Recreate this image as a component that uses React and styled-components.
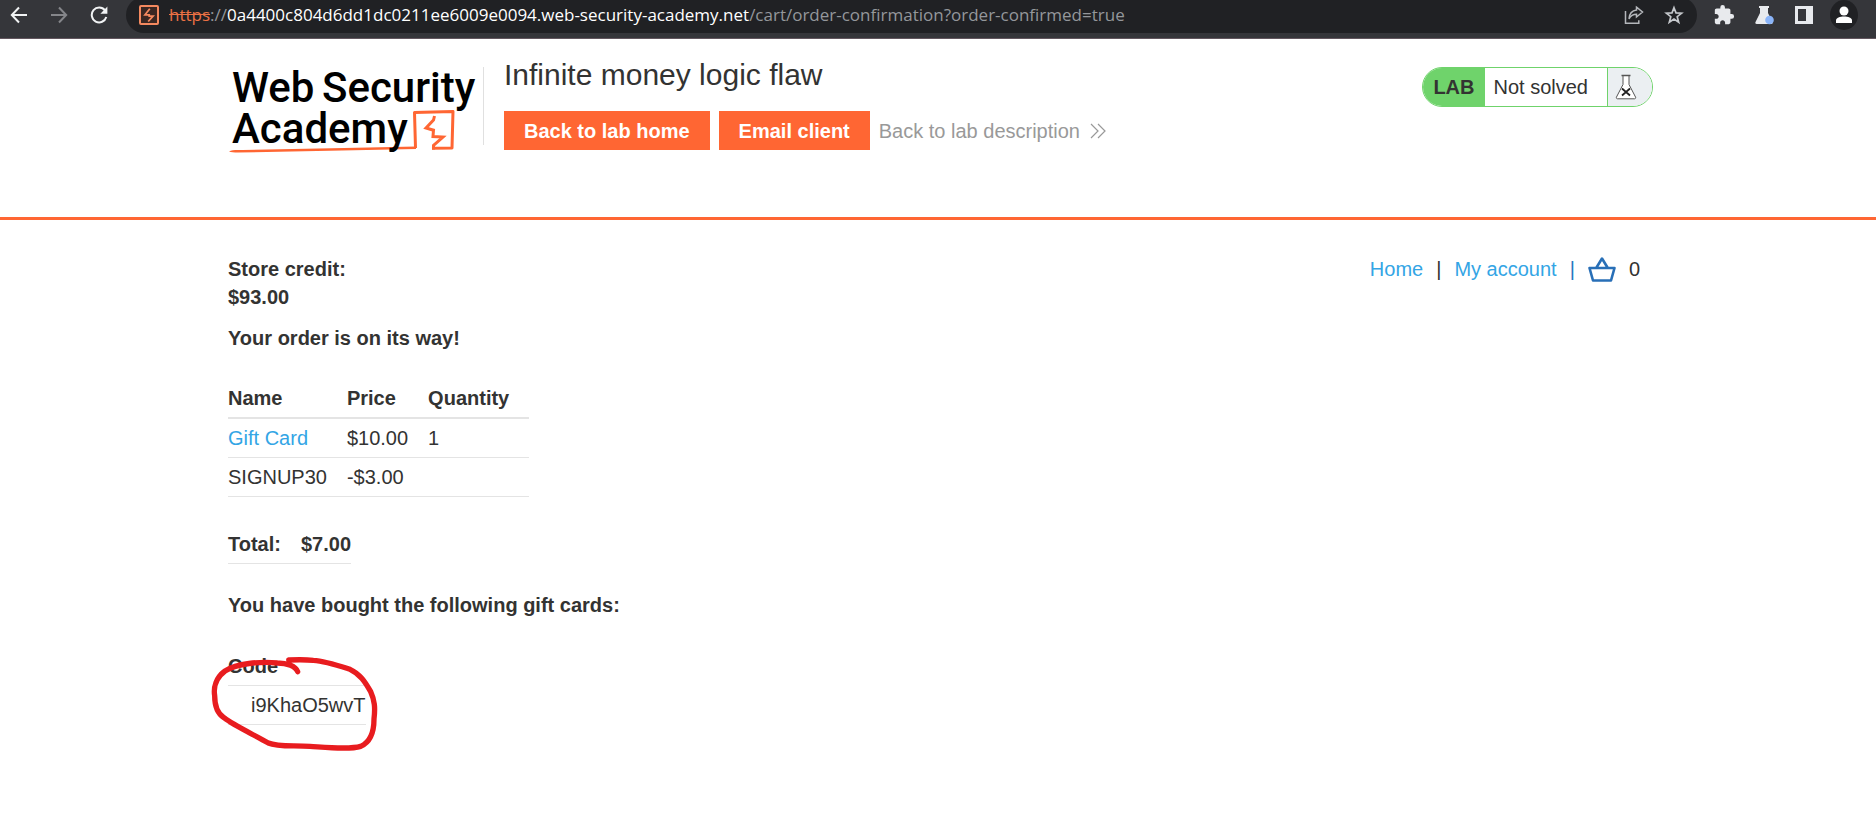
import React from "react";
import styled, { createGlobalStyle } from "styled-components";

const Global = createGlobalStyle`
  *, *::before, *::after { box-sizing: border-box; }
  body {
    margin: 0;
    background: #fff;
    color: #333332;
    font: 20px/28px Arial, "Liberation Sans", sans-serif;
  }
  a { text-decoration: none; }
`;

/* Browser toolbar */
const Toolbar = styled.div`
  display: flex;
  align-items: flex-start;
  height: 39px;
  padding-right: 18px;
  overflow: hidden;
  background: #35363a;
  border-bottom: 1px solid #63575f;
`;

const IconButton = styled.button`
  display: flex;
  align-items: center;
  justify-content: center;
  flex: none;
  width: 28px;
  height: 30px;
  margin: 0;
  padding: 0;
  border: 0;
  border-radius: ${(p) => (p.$round ? "50%" : "0")};
  background: ${(p) => (p.$round ? "#202124" : "transparent")};
  color: ${(p) => p.$color || "#e8eaed"};
  svg { display: block; flex: none; }
`;

const NavButtons = styled.div`
  display: flex;
  gap: 12px;
  padding: 0 13px 0 5px;
`;

const AddressBar = styled.div`
  display: flex;
  align-items: center;
  flex: 1;
  min-width: 0;
  height: 36px;
  margin-top: -3px;
  padding: 0 9px 0 13px;
  border-radius: 18px;
  background: #202124;
`;

const Address = styled.div`
  flex: 1;
  min-width: 0;
  margin-left: 10px;
  overflow: hidden;
  white-space: nowrap;
  color: #94979b;
  font: 17px/28px "Open Sans", "Noto Sans", sans-serif;
`;

const Unsafe = styled.span`
  color: #ec7144;
  text-decoration: line-through;
`;

const Domain = styled.span`
  color: #fff;
`;

const AddressActions = styled.div`
  display: flex;
  gap: 12px;
`;

const Extensions = styled.div`
  display: flex;
  gap: 12px;
  padding-left: 13px;
`;

/* Lab header */
const Header = styled.header`
  display: flex;
  align-items: flex-start;
  min-height: 181px;
  padding: 28px 223px 28px 228px;
  border-bottom: 3px solid #ff6633;
`;

const LogoLink = styled.a`
  display: block;
  flex: none;
  padding-right: 6px;
  border-right: 1px solid #e0e0e0;
  height: 78px;
  svg { display: block; overflow: visible; }
`;

const LogoText = styled.text`
  font: 500 42px Roboto, sans-serif;
  fill: #000;
`;

const TitleBlock = styled.div`
  flex: 1;
  padding-left: 20px;
`;

const Title = styled.h2`
  margin: -12px 0 16px;
  font-size: 30px;
  font-weight: 400;
  line-height: 40px;
`;

const Actions = styled.div`
  display: flex;
  align-items: center;
  gap: 9px;
`;

const ActionButton = styled.button`
  height: 39px;
  margin: 0;
  padding: 0 20px;
  border: 0;
  background: #ff6633;
  color: #fff;
  font: bold 20px/28px Arial, "Liberation Sans", sans-serif;
  white-space: nowrap;
`;

const BackLink = styled.a`
  display: flex;
  align-items: center;
  gap: 10px;
  color: #999;
  white-space: nowrap;
`;

const Status = styled.div`
  display: flex;
  flex: none;
  height: 40px;
  overflow: hidden;
  border: 1px solid #6fd36b;
  border-radius: 20px;
  line-height: 38px;
`;

const StatusLab = styled.span`
  padding: 0 10px;
  background: #6fd36b;
  font-weight: bold;
`;

const StatusText = styled.span`
  padding: 0 19px 0 9px;
  border-right: 1px solid #6fd36b;
`;

const StatusIcon = styled.span`
  display: flex;
  align-items: center;
  width: 44px;
  padding-left: 7px;
  background: #ebeff2;
`;

/* Page content */
const Main = styled.main`
  display: flex;
  justify-content: space-between;
  align-items: flex-start;
  padding: 35px 236px 60px 228px;
`;

const Line = styled.p`
  margin: ${(p) => p.$top || 0}px 0 0;
  font-weight: bold;
`;

const Table = styled.table`
  margin-top: ${(p) => p.$top || 0}px;
  border-collapse: separate;
  border-spacing: 0;
  th, td {
    padding: 5px 20px 5px 0;
    border-bottom: 1px solid #e4e4e4;
    text-align: left;
    white-space: nowrap;
  }
  thead th { border-bottom-width: ${(p) => (p.$thickHead ? 2 : 1)}px; }
  th:last-child, td:last-child { padding-right: ${(p) => (p.$flush ? 0 : 20)}px; }
`;

const CodeCell = styled.td`
  && { padding-left: 23px; }
`;

const CodeBlock = styled.div`
  position: relative;
  margin-top: 28px;
`;

const Circled = styled.svg`
  position: absolute;
  left: -28px;
  top: -8px;
  pointer-events: none;
`;

const Link = styled.a`
  color: #33a5e5;
`;

const TopLinks = styled.nav`
  display: flex;
  align-items: center;
  gap: 13px;
`;

const Divider = styled.span`
  color: ${(p) => (p.$blue ? "#2878c0" : "#333332")};
`;

const Basket = styled.a`
  display: flex;
  svg { display: block; }
`;

const items = [
  { name: "Gift Card", price: "$10.00", quantity: "1", linked: true },
  { name: "SIGNUP30", price: "-$3.00", quantity: "" },
];

function Arrow({ back }) {
  return (
    <svg width="18" height="18" viewBox="0 0 18 18" fill="none" stroke="currentColor" strokeWidth="2">
      <path d={back ? "M17 9H2M9 1.5 1.8 9 9 16.5" : "M1 9h15M9 1.5 16.2 9 9 16.5"} />
    </svg>
  );
}

function Browser() {
  return (
    <Toolbar>
      <NavButtons>
        <IconButton aria-label="Back" $color="#f1f3f4"><Arrow back /></IconButton>
        <IconButton aria-label="Forward" $color="#85868a"><Arrow /></IconButton>
        <IconButton aria-label="Reload" $color="#f1f3f4">
          <svg width="18" height="18" viewBox="0 0 18 18">
            <path d="M15 4.4A7.4 7.4 0 1 0 16.3 11" fill="none" stroke="currentColor" strokeWidth="2" />
            <path d="M17.4 .6v7.2h-7z" fill="currentColor" />
          </svg>
        </IconButton>
      </NavButtons>
      <AddressBar>
        <svg width="20" height="20" viewBox="0 0 20 20">
          <rect x="1" y="1" width="18" height="18" rx="1" fill="#3a2722" stroke="#f4895f" strokeWidth="2" />
          <path d="M10.800 3.800 6 9.800h4.200v1.400h3.800L9.200 16.500" fill="none" stroke="#f4895f" strokeWidth="1.800" />
        </svg>
        <Address role="textbox" aria-label="Address">
          <Unsafe>https</Unsafe>://
          <Domain>0a4400c804d6dd1dc0211ee6009e0094.web-security-academy.net</Domain>
          /cart/order-confirmation?order-confirmed=true
        </Address>
        <AddressActions>
          <IconButton aria-label="Share" $color="#b4b7bb">
            <svg width="20" height="20" viewBox="0 0 20 20" fill="none" stroke="currentColor" strokeWidth="1.5">
              <path d="M1.5 6v12.2h13.3v-3" />
              <path d="M12.5 2.2 18.5 7l-6 5V9.2C9.4 9.2 6.8 10.5 5 13.8 5.4 8.6 8.3 5.5 12.5 5z" />
            </svg>
          </IconButton>
          <IconButton aria-label="Bookmark" $color="#c4c7cb">
            <svg width="20" height="20" viewBox="0 0 20 20" fill="none" stroke="currentColor" strokeWidth="1.7">
              <path d="m10 2.7 2 5.2 5.6.3-4.4 3.5 1.5 5.5-4.7-3.1-4.7 3.1 1.5-5.5-4.4-3.5 5.6-.3z" />
            </svg>
          </IconButton>
        </AddressActions>
      </AddressBar>
      <Extensions>
        <IconButton aria-label="Extensions">
          <svg width="22" height="22" viewBox="0 0 24 24" fill="currentColor">
            <path d="M20.5 11H19V7c0-1.1-.9-2-2-2h-4V3.500a2.500 2.500 0 0 0-5 0V5H4c-1.100 0-2 .9-2 2v3.800h1.500c1.500 0 2.700 1.200 2.700 2.700S5 16.200 3.500 16.200H2V20c0 1.100.9 2 2 2h3.800v-1.500c0-1.500 1.200-2.700 2.700-2.700s2.700 1.200 2.700 2.700V22H17c1.100 0 2-.9 2-2v-4h1.500a2.500 2.500 0 0 0 0-5z" />
          </svg>
        </IconButton>
        <IconButton aria-label="Labs">
          <svg width="20" height="20" viewBox="0 0 20 20">
            <path d="M5 1h10v2h-1v5l4.500 9c.5 1-.1 2-1.200 2H2.700c-1.100 0-1.700-1-1.200-2L6 8V3H5z" fill="#e8eaed" />
            <circle cx="15.500" cy="15" r="4.300" fill="#8ab4f8" />
          </svg>
        </IconButton>
        <IconButton aria-label="Side panel">
          <svg width="18" height="18" viewBox="0 0 18 18">
            <path d="M0 0h18v18H0zM3 3v12h8V3z" fill="#e8eaed" fillRule="evenodd" />
          </svg>
        </IconButton>
        <IconButton aria-label="Profile" $round>
          <svg width="18" height="20" viewBox="0 0 18 20" fill="#fff">
            <circle cx="9" cy="6" r="4.500" />
            <path d="M1 18v-2.500c0-2.800 4-4 8-4s8 1.200 8 4V18z" />
          </svg>
        </IconButton>
      </Extensions>
    </Toolbar>
  );
}

function Logo() {
  return (
    <LogoLink href="#" aria-label="Web Security Academy">
      <svg width="249" height="88" viewBox="0 0 249 88">
        <LogoText x="4" y="35">Web</LogoText>
        <LogoText x="94" y="35">Security</LogoText>
        <path d="M1 84.500c3-2 9-1.500 14-1.500l101-2 72-1.500v2.500l-74 1.500-104 2c-4 0-7-.2-9-1z" fill="#ff6633" />
        <path d="M187.500 81 186.500 45.500l38.500-1-1 36.500-20 .3" fill="none" stroke="#ff6633" strokeWidth="3" strokeLinejoin="round" />
        <path d="m206.500 49-1 4-7.500 8 7.500 2.200-.5 6.300 10 .5-9.500 8.500v4" fill="none" stroke="#ff6633" strokeWidth="3" />
        <LogoText x="4" y="76">Academy</LogoText>
      </svg>
    </LogoLink>
  );
}

function LabHeader() {
  return (
    <Header>
      <Logo />
      <TitleBlock>
        <Title>Infinite money logic flaw</Title>
        <Actions>
          <ActionButton>Back to lab home</ActionButton>
          <ActionButton>Email client</ActionButton>
          <BackLink href="#">
            Back to lab description
            <svg width="16" height="16" viewBox="0 0 16 16" fill="none" stroke="#999" strokeWidth="1.200">
              <path d="m1 1 7 7-7 7M8 1l7 7-7 7" />
            </svg>
          </BackLink>
        </Actions>
      </TitleBlock>
      <Status>
        <StatusLab>LAB</StatusLab>
        <StatusText>Not solved</StatusText>
        <StatusIcon>
          <svg width="22" height="26" viewBox="0 0 22 26" fill="none" stroke="#555">
            <path d="M8 1.500v9L1.500 23c-.5 1 0 1.800 1 1.800h17c1 0 1.500-.8 1-1.800L14 10.500v-9" fill="#fff" />
            <path d="M6.500 1.500h9" strokeWidth="1.500" />
            <path d="m7 14.500 8 7m0-7-8 7" stroke="#222" strokeWidth="1.800" />
          </svg>
        </StatusIcon>
      </Status>
    </Header>
  );
}

export default function App() {
  return (
    <>
      <Global />
      <Browser />
      <LabHeader />
      <Main>
        <section>
          <Line>Store credit:</Line>
          <Line>$93.00</Line>
          <Line $top={13}>Your order is on its way!</Line>
          <Table $top={27} $thickHead>
            <thead>
              <tr><th>Name</th><th>Price</th><th>Quantity</th></tr>
            </thead>
            <tbody>
              {items.map((item) => (
                <tr key={item.name}>
                  <td>{item.linked ? <Link href="#">{item.name}</Link> : item.name}</td>
                  <td>{item.price}</td>
                  <td>{item.quantity}</td>
                </tr>
              ))}
            </tbody>
          </Table>
          <Table $top={28} $flush>
            <tbody>
              <tr><th>Total:</th><th>$7.00</th></tr>
            </tbody>
          </Table>
          <Line $top={27}>You have bought the following gift cards:</Line>
          <CodeBlock>
            <Table $flush>
              <thead>
                <tr><th>Code</th></tr>
              </thead>
              <tbody>
                <tr><CodeCell>i9KhaO5wvT</CodeCell></tr>
              </tbody>
            </Table>
            <Circled width="200" height="120" viewBox="0 0 600 360" fill="none" stroke="#e81c1f" strokeWidth="16" strokeLinecap="round" strokeLinejoin="round" aria-hidden="true">
              <path d="M293 98C287 82 262 72 232 72C180 66 110 74 75 96C48 116 40 145 44 170C44 200 50 222 72 236C105 262 165 288 205 312C232 324 275 319 330 322C390 326 450 332 482 322C512 309 522 280 522 240C526 205 524 185 512 158C495 128 480 105 450 91C410 78 375 66 340 64C312 61 290 62 266 63" />
            </Circled>
          </CodeBlock>
        </section>
        <TopLinks>
          <Link href="#">Home</Link>
          <Divider>|</Divider>
          <Link href="#">My account</Link>
          <Divider $blue>|</Divider>
          <Basket href="#" aria-label="Basket">
            <svg width="28" height="25" viewBox="0 0 28 25" fill="none" stroke="#286fb7" strokeWidth="2.600" strokeLinejoin="round" strokeLinecap="round">
              <path d="M1.500 11h25l-3.500 12.500H5zM8.500 10.500l5.500-9 5.500 9" />
            </svg>
          </Basket>
          <span>0</span>
        </TopLinks>
      </Main>
    </>
  );
}
